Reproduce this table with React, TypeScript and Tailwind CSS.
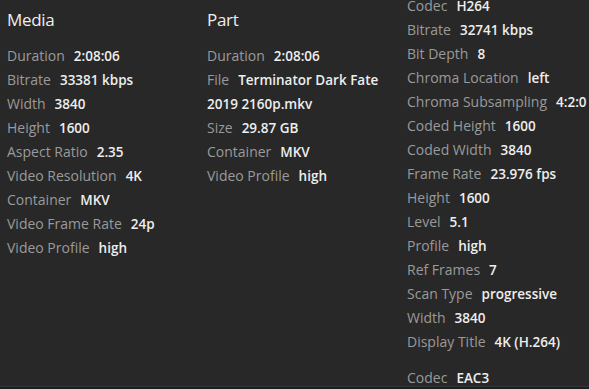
import React from "react";

type Row = [string, string];

const media: Row[] = [
  ["Duration", "2:08:06"],
  ["Bitrate", "33381 kbps"],
  ["Width", "3840"],
  ["Height", "1600"],
  ["Aspect Ratio", "2.35"],
  ["Video Resolution", "4K"],
  ["Container", "MKV"],
  ["Video Frame Rate", "24p"],
  ["Video Profile", "high"],
];

const part: Row[] = [
  ["Duration", "2:08:06"],
  ["File", "Terminator Dark Fate 2019 2160p.mkv"],
  ["Size", "29.87 GB"],
  ["Container", "MKV"],
  ["Video Profile", "high"],
];

const video: Row[] = [
  ["Codec", "H264"],
  ["Bitrate", "32741 kbps"],
  ["Bit Depth", "8"],
  ["Chroma Location", "left"],
  ["Chroma Subsampling", "4:2:0"],
  ["Coded Height", "1600"],
  ["Coded Width", "3840"],
  ["Frame Rate", "23.976 fps"],
  ["Height", "1600"],
  ["Level", "5.1"],
  ["Profile", "high"],
  ["Ref Frames", "7"],
  ["Scan Type", "progressive"],
  ["Width", "3840"],
  ["Display Title", "4K (H.264)"],
];

const audio: Row[] = [["Codec", "EAC3"]];

function Item({ r }: { r: Row }) {
  return (
    <div className="text-[14px] leading-[24px]">
      <span className="text-[#9a9a9a] mr-[9px]">{r[0]}</span>
      <span className="text-[#eeeeee] font-semibold text-[13.5px]">{r[1]}</span>
    </div>
  );
}

export default function App() {
  return (
    <div
      className="w-[589px] h-[389px] bg-[#282828] overflow-hidden flex flex-col"
      style={{ fontFamily: '"Open Sans", "Noto Sans", sans-serif' }}
    >
      <div className="flex-1 flex pl-[7px] overflow-hidden">
        <div className="w-[200px] pt-[8px]">
          <div className="text-[17px] leading-[24px] text-[#eeeeee] tracking-[-0.3px] mb-[12px]">Media</div>
          {media.map((r, i) => (
            <Item key={i} r={r} />
          ))}
        </div>
        <div className="w-[200px] pt-[8px] pr-[14px]">
          <div className="text-[17px] leading-[24px] text-[#eeeeee] tracking-[-0.3px] mb-[12px]">Part</div>
          {part.map((r, i) => (
            <Item key={i} r={r} />
          ))}
        </div>
        <div className="w-[182px] mt-[-6px] whitespace-nowrap">
          {video.map((r, i) => (
            <Item key={i} r={r} />
          ))}
          <div className="mt-[12px]">
            {audio.map((r, i) => (
              <Item key={i} r={r} />
            ))}
          </div>
        </div>
      </div>
      <div className="h-[1px] bg-[#363636]" />
      <div className="h-[2px] bg-[#1e1e1e]" />
    </div>
  );
}
